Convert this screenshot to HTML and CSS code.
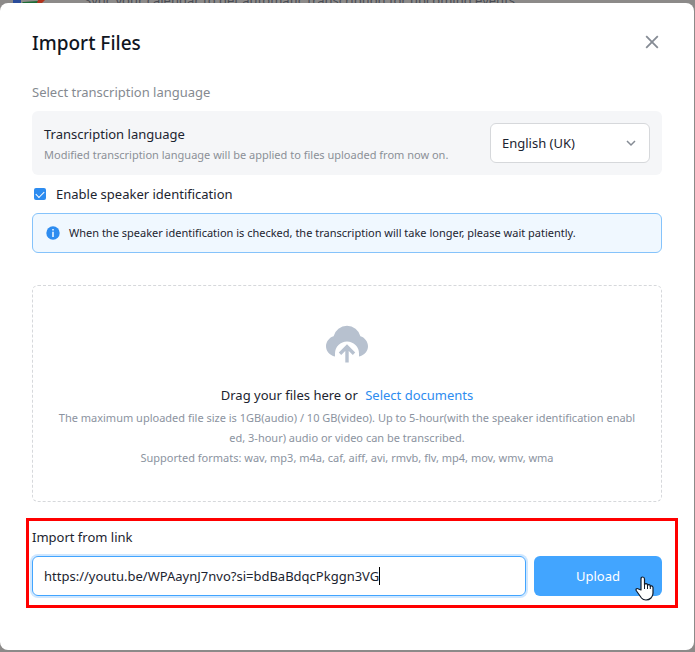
FILE: index.html
```html
<!DOCTYPE html>
<html lang="en">
<head>
<meta charset="utf-8">
<meta name="viewport" content="width=device-width, initial-scale=1">
<title>Import Files</title>
<link rel="stylesheet" href="styles.css">
</head>
<body>
<div class="page">
  <svg class="page-logo" width="48" height="10" viewBox="0 0 48 10" aria-hidden="true">
    <path d="M13 0h8v3h-8z" fill="#2a4c9a"/>
    <path d="M21 0h17l-1 2-16 1z" fill="#8e8c8b"/>
    <path d="M23 2l15-1v2H22z" fill="#1d6b35"/>
    <path d="M38 0h7l-3 3h-5z" fill="#b2331c"/>
  </svg>
  <p class="page-text">Sync your calendar to get automatic transcription for upcoming events</p>
</div>

<div class="dialog" role="dialog" aria-labelledby="dialog-title">
  <header class="dialog-head">
    <h1 id="dialog-title">Import Files</h1>
    <button class="close" type="button" aria-label="Close">
      <svg width="20" height="20" viewBox="0 0 20 20" fill="none" stroke="#858b94" stroke-width="1.8"><path d="M4.200 3.200l11.600 11.600M15.800 3.200l-11.600 11.600"/></svg>
    </button>
  </header>

  <p class="section-label">Select transcription language</p>

  <div class="language">
    <div class="language-text">
      <label for="language">Transcription language</label>
      <p class="hint">Modified transcription language will be applied to files uploaded from now on.</p>
    </div>
    <div class="select">
      <select id="language"><option>English (UK)</option></select>
      <svg class="chevron" width="12" height="12" viewBox="0 0 12 12" fill="none" stroke="#858b94" stroke-width="1.5"><path d="M2 4l4 4 4-4"/></svg>
    </div>
  </div>

  <div class="check">
    <input type="checkbox" id="speaker" checked>
    <label for="speaker">Enable speaker identification</label>
  </div>

  <div class="notice">
    <svg width="14" height="14" viewBox="0 0 14 14" aria-hidden="true"><circle cx="7" cy="7" r="6.700" fill="#2d8cf0"/><path d="M6.200 3h1.600v1.500H6.200zM6.200 5.700h1.600V11H6.200z" fill="#e8f4ff"/></svg>
    <p>When the speaker identification is checked, the transcription will take longer, please wait patiently.</p>
  </div>

  <div class="dropzone">
    <svg width="42" height="39" viewBox="0 0 42 39" aria-hidden="true">
      <path d="M9 32.500C3.500 31.500 0 27 0 22.300C0 17.500 3.500 13.300 7.600 12.200A13.800 13.800 0 0 1 34.400 12.200C38.500 13.300 42 17.500 42 22.300C42 27 38.500 31.500 33 32.500V29.500A12 12 0 0 0 9 29.500Z" fill="#b7c1cf"/>
      <path d="M21 38.500V22.500M14 29.700L21 22.700l7 7" fill="none" stroke="#b7c1cf" stroke-width="3.400"/>
    </svg>
    <p class="drag">Drag your files here or <a href="#">Select documents</a></p>
    <p class="limits">The maximum uploaded file size is 1GB(audio) / 10 GB(video). Up to 5-hour(with the speaker identification enabl<br>ed, 3-hour) audio or video can be transcribed.</p>
    <p class="limits">Supported formats: wav, mp3, m4a, caf, aiff, avi, rmvb, flv, mp4, mov, wmv, wma</p>
  </div>

  <form class="link-import">
    <label for="link">Import from link</label>
    <div class="link-row">
      <div class="field">
        <input id="link" type="text" value="https://youtu.be/WPAaynJ7nvo?si=bdBaBdqcPkggn3VG">
        <span class="caret"></span>
      </div>
      <button class="upload" type="button">Upload</button>
    </div>
    <svg class="pointer" width="20" height="25" viewBox="0 0 20 25" aria-hidden="true">
      <path d="M6 14V3q0-2 1.700-2T9.500 3v6q.2-1.500 1.600-1.300T12.500 9v.5q.3-1 1.500-.8T15.300 10v.6q.3-.9 1.400-.7T18 11.500V17q0 2-1 3.500T16 22q-2 2-5 2T6.500 22L1.500 15q-1-1.500 0-2.200t2 .2z" fill="#fff" stroke="#111b29" stroke-width="1.200" stroke-linejoin="round"/>
      <path d="M9.500 8v5M12.500 9v4M15.300 10v3" fill="none" stroke="#111b29"/>
    </svg>
  </form>
</div>
</body>
</html>
```

FILE: styles.css
```css
* { box-sizing: border-box; }

body {
  margin: 0;
  min-height: 100vh;
  background: #8c8a89;
  color: #1c2430;
  font: 13px/20px "Noto Sans", "Open Sans", sans-serif;
}

h1, p { margin: 0; }

.page {
  position: absolute;
  inset: 0;
  display: flex;
  align-items: flex-start;
  overflow: hidden;
}

.page-logo { width: 48px; }

.page-text {
  margin: -10px 0 0 36px;
  color: #4a4d55;
  white-space: nowrap;
}

.dialog {
  position: absolute;
  inset: 3px 1px 2px 0;
  padding: 24px 32px;
  border-radius: 8px;
  background: #fff;
}

.dialog-head {
  display: flex;
  justify-content: space-between;
  align-items: center;
  height: 32px;
}

.dialog-head h1 {
  color: #10161f;
  font-size: 19px;
  font-weight: 500;
}

.close {
  display: flex;
  padding: 0;
  border: 0;
  background: none;
}

.section-label {
  margin-top: 23px;
  color: #858a91;
}

.language {
  display: flex;
  justify-content: space-between;
  align-items: center;
  margin-top: 9px;
  padding: 12px;
  height: 64px;
  border-radius: 6px;
  background: #f5f6f8;
}

.language-text {
  display: grid;
  gap: 1px;
  padding-top: 3px;
}

.hint {
  color: #8b9097;
  font-size: 11px;
}

.select {
  position: relative;
  flex: 0 0 160px;
}

.select select {
  width: 100%;
  height: 40px;
  padding: 0 32px 0 11px;
  appearance: none;
  border: 1px solid #d6d8db;
  border-radius: 6px;
  background: #fff;
  color: inherit;
  font: inherit;
}

.chevron {
  position: absolute;
  top: 14px;
  right: 13px;
  pointer-events: none;
}

.check {
  display: flex;
  align-items: center;
  gap: 10px;
  margin: 9px 0;
  padding-left: 2px;
}

.check input {
  width: 12px;
  height: 12px;
  margin: 0;
  appearance: none;
  border-radius: 2px;
  background: #2d8cf0;
  display: grid;
  place-items: center;
}

.check input::after {
  content: "";
  width: 7px;
  height: 4px;
  margin-bottom: 2px;
  border: solid #fff;
  border-width: 0 0 1px 1px;
  transform: rotate(-45deg);
}

.notice {
  display: flex;
  align-items: center;
  gap: 9px;
  height: 40px;
  padding: 0 13px;
  border: 1px solid #85c3fb;
  border-radius: 6px;
  background: #f0f8ff;
  font-size: 11px;
}

.dropzone {
  display: flex;
  flex-direction: column;
  align-items: center;
  margin-top: 32px;
  padding: 38px 16px 33px;
  border: 1px dashed #d6d8db;
  border-radius: 6px;
  text-align: center;
}

.drag {
  margin: 22px 0 3px;
}

.drag a {
  margin-left: 4px;
  color: #2d8cf0;
  text-decoration: none;
}

.limits {
  color: #8b93a0;
  font-size: 11px;
}

.link-import {
  position: relative;
  margin: 16px -16px 0 -6px;
  padding: 6px 13px 9px 3px;
  border: 3px solid #f00;
}

.link-row {
  display: flex;
  gap: 8px;
  margin-top: 9px;
}

.field {
  display: flex;
  align-items: center;
  flex: 1;
  height: 40px;
  padding: 0 11px;
  border: 1px solid #42a5ff;
  border-radius: 6px;
  box-shadow: 0 0 0 2px #cfe7ff;
}

.field input {
  field-sizing: content;
  padding: 0;
  border: 0;
  outline: 0;
  background: none;
  color: inherit;
  font: inherit;
}

.caret {
  width: 1px;
  height: 18px;
  background: #000;
}

.upload {
  flex: 0 0 128px;
  border: 0;
  border-radius: 6px;
  background: #42a5ff;
  color: #fff;
  font: inherit;
}

.pointer {
  position: absolute;
  right: 20px;
  bottom: 4px;
}
```
